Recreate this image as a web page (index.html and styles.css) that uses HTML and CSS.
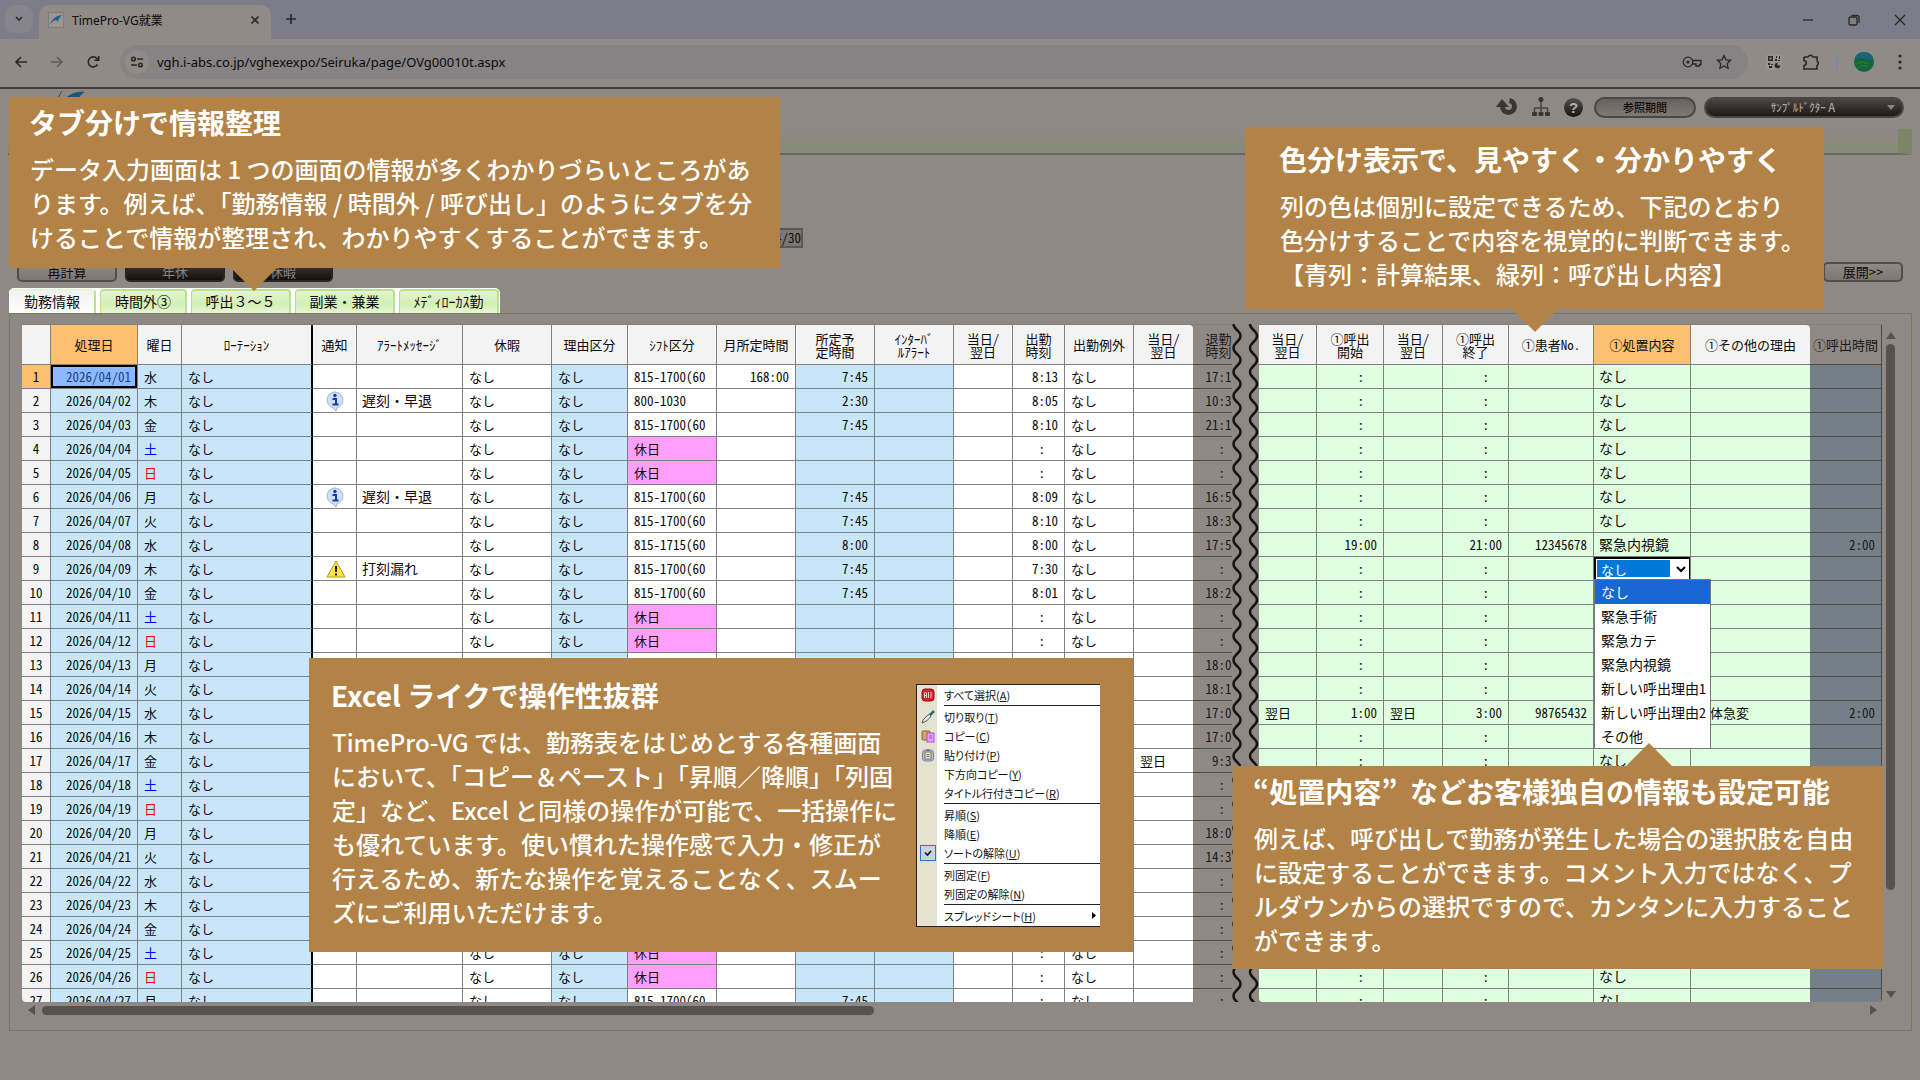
FILE: index.html
```html
<!DOCTYPE html>
<html lang="ja">
<head>
<meta charset="utf-8">
<title>TimePro-VG就業</title>
<link rel="stylesheet" href="styles.css">
</head>
<body>
<div class="window">
  <header class="browser">
    <div class="titlebar">
      <button class="tab-search" aria-label="タブを検索"><svg width="10" height="8" viewBox="0 0 10 8"><path d="M2 2l3 3 3-3" class="ln2"/></svg></button>
      <div class="browser-tab">
        <svg class="favicon" width="16" height="16" viewBox="0 0 16 16"><rect x=".5" y=".5" width="15" height="15" fill="#9a9592" stroke="#827d7a"/><path d="M2 12C5 6 8 4 14 3c-2 2-3 3-4 7-1-3-3-3-8 2z" fill="#1b5f8e"/></svg>
        <span class="tab-title">TimePro-VG就業</span>
        <button class="plain" aria-label="閉じる"><svg width="10" height="10" viewBox="0 0 10 10"><path d="M1.500 1.500l7 7M8.500 1.500l-7 7" class="ln2"/></svg></button>
      </div>
      <button class="plain new-tab" aria-label="新しいタブ"><svg width="12" height="12" viewBox="0 0 12 12"><path d="M6 1v10M1 6h10" class="ln2"/></svg></button>
      <div class="window-controls">
        <button class="plain" aria-label="最小化"><svg width="12" height="12" viewBox="0 0 12 12"><path d="M1 6h10" class="ln"/></svg></button>
        <button class="plain" aria-label="元に戻す"><svg width="12" height="12" viewBox="0 0 12 12"><rect x="1" y="3" width="8" height="8" rx="1.500" class="ln"/><path d="M3.500 1.500H9a2 2 0 0 1 2 2V9" class="ln"/></svg></button>
        <button class="plain" aria-label="ウィンドウを閉じる"><svg width="12" height="12" viewBox="0 0 12 12"><path d="M1 1l10 10M11 1L1 11" class="ln"/></svg></button>
      </div>
    </div>
    <div class="toolbar">
      <button class="plain" aria-label="戻る"><svg width="14" height="14" viewBox="0 0 14 14"><path d="M13 7H2M7 2L2 7l5 5" class="ln2"/></svg></button>
      <button class="plain faded" aria-label="進む"><svg width="14" height="14" viewBox="0 0 14 14"><path d="M1 7h11M7 2l5 5-5 5" class="ln2"/></svg></button>
      <button class="plain" aria-label="再読み込み"><svg width="14" height="14" viewBox="0 0 14 14"><path d="M11.500 9.500A5 5 0 1 1 11 3.500L12.500 5M12.700 1v4.300H8.500" class="ln2"/></svg></button>
      <div class="address">
        <span class="site-info"><svg width="14" height="12" viewBox="0 0 14 12"><circle cx="3.500" cy="3" r="1.800" class="ln2"/><path d="M7 3h6M1 9h6" class="ln2"/><circle cx="10.500" cy="9" r="1.800" class="ln2"/></svg></span>
        <input class="url" aria-label="アドレス" value="vgh.i-abs.co.jp/vghexexpo/Seiruka/page/OVg00010t.aspx">
        <svg width="20" height="12" viewBox="0 0 20 12"><circle cx="6" cy="6" r="4.800" class="ln"/><circle cx="6" cy="6" r="1.600" fill="#2b2725"/><path d="M10.500 4.500H19v4h-1.500V10H14V8h-3.500" class="ln"/></svg>
        <svg width="16" height="16" viewBox="0 0 16 16"><path d="M8 1.500l2 4.300 4.600.5-3.400 3.200.9 4.700L8 11.900l-4.100 2.300.9-4.700L1.400 6.300 6 5.800z" class="ln"/></svg>
      </div>
      <div class="extensions">
        <svg width="16" height="16" viewBox="0 0 16 16"><rect width="16" height="16" rx="2" fill="#999390"/><path d="M2 2h5v5H2zM10 2h1v2h-1zM13 2h1v3h-1zM9 5h2v2H9zM12 6h2v1h-2zM2 9h2v2H2zM5 10h2v1H5zM3 12h3v2H3z" fill="#2b2725"/><path d="M3.500 3.500h2v2h-2z" fill="#999390"/><circle cx="11.500" cy="11.500" r="2.800" fill="#2b2725"/><circle cx="12.800" cy="10" r="1.500" fill="#999390"/></svg>
        <svg width="18" height="18" viewBox="0 0 18 18"><path d="M2 4h4.500M10.500 4H15v4.500M15 12v4H2v-3.500c3-.3 3-4.700 0-5V4M6.500 4a2 1.800 0 0 1 4 0M15 8.500a1.700 1.800 0 0 1 0 3.500" class="ln2"/></svg>
        <span class="divider"></span>
        <svg width="20" height="20" viewBox="0 0 20 20"><circle cx="10" cy="10" r="10" fill="#11663f"/><path d="M.5 7A10 10 0 0 1 19.500 7C14 9 9 4 .5 7z" fill="#17657c"/><path d="M2 13c4-4 8-3 12-1M4 16c3-3 7-3 10-1" fill="none" stroke="#3d7d2a"/></svg>
        <svg class="kebab" width="4" height="16" viewBox="0 0 4 16"><g fill="#2b2725"><circle cx="2" cy="2" r="1.600"/><circle cx="2" cy="8" r="1.600"/><circle cx="2" cy="14" r="1.600"/></g></svg>
      </div>
    </div>
  </header>

  <main class="app">
    <div class="app-head">
      <div class="brand">
        <svg width="32" height="24" viewBox="0 0 32 24"><path d="M2 10L8 0M6 20C8 8 16 1 30 1c-6 4-8 9-9 18-3-8-8-7-15 1z" fill="#1b5579" stroke="#1b5579"/></svg>
        <span>TimePro-<b>VG</b></span>
      </div>
      <div class="app-actions">
        <svg width="22" height="22" viewBox="0 0 22 22"><path d="M6.500 10a6 6 0 1 0 7-5.500" fill="none" stroke="#3a3634" stroke-width="5"/><path d="M0 11L6 3l7 8z" fill="#3a3634"/></svg>
        <svg width="18" height="20" viewBox="0 0 18 20"><path d="M9 3v14M2.500 17v-6h13v6" fill="none" stroke="#4a4644" stroke-width="1.500"/><g fill="#3a3634"><circle cx="9" cy="2.500" r="2.500"/><rect y="15" width="5" height="4" rx="1"/><rect x="6.500" y="15" width="5" height="4" rx="1"/><rect x="13" y="15" width="5" height="4" rx="1"/></g></svg>
        <button class="help" aria-label="ヘルプ">?</button>
        <button class="pill">参照期間</button>
        <button class="pill pill-dark"><span>ｻﾝﾌﾟﾙﾄﾞｸﾀｰ A</span><svg width="8" height="5" viewBox="0 0 8 5"><path d="M0 0h8L4 5z" fill="#8a8582"/></svg></button>
      </div>
    </div>
    <div class="menu-band"></div>
    <div class="conditions">
      <span class="period">2026/04/01～2026/04/30</span>
    </div>
    <div class="commands">
      <button class="cmd">再計算</button>
      <button class="cmd cmd-dark">年休</button>
      <button class="cmd cmd-dark">休暇</button>
      <button class="cmd expand">展開&gt;&gt;</button>
    </div>
    <nav class="tabs">
      <button class="tab active">勤務情報</button>
      <button class="tab">時間外③</button>
      <button class="tab wide">呼出３～５</button>
      <button class="tab wide">副業・兼業</button>
      <button class="tab wide">ﾒﾃﾞｨﾛｰｶｽ勤</button>
    </nav>
    <section class="panel">
      <div class="sheet">
        <div class="pane pane-left">
          <table class="grid" id="left-grid">
            <colgroup><col class="w29"><col class="w87"><col class="w44"><col class="w131"><col class="w44"><col class="w106"><col class="w89"><col class="w76"><col class="w89"><col class="w79"><col class="w79"><col class="w79"><col class="w59"><col class="w52"><col class="w69"><col class="w59"><col class="w52"></colgroup>
            <thead><tr><th></th><th class="picked">処理日</th><th>曜日</th><th class="frozen">ﾛｰﾃｰｼｮﾝ</th><th>通知</th><th>ｱﾗｰﾄﾒｯｾｰｼﾞ</th><th>休暇</th><th>理由区分</th><th>ｼﾌﾄ区分</th><th>月所定時間</th><th>所定予<br>定時間</th><th>ｲﾝﾀｰﾊﾞ<br>ﾙｱﾗｰﾄ</th><th>当日/<br>翌日</th><th>出勤<br>時刻</th><th>出勤例外</th><th class="edge">当日/<br>翌日</th><th class="dim">退勤<br>時刻</th></tr></thead>
            <tbody></tbody>
          </table>
        </div>
        <svg class="tear" aria-hidden="true">
          <defs><pattern id="wave" width="27" height="24" patternUnits="userSpaceOnUse"><path d="M8.500 -12C8.500 -6 1.500 -6 1.500 0S8.500 6 8.500 12S1.500 18 1.500 24S8.500 30 8.500 36M25 -12C25 -6 18 -6 18 0S25 6 25 12S18 18 18 24S25 30 25 36" fill="none" stroke="#1c1210" stroke-width="2.500"/></pattern></defs>
          <rect width="100%" height="100%" fill="url(#wave)"/>
        </svg>
        <div class="pane pane-right">
          <table class="grid" id="right-grid">
            <colgroup><col class="w58"><col class="w67"><col class="w59"><col class="w66"><col class="w85"><col class="w97"><col><col class="w72"></colgroup>
            <thead><tr><th>当日/<br>翌日</th><th>①呼出<br>開始</th><th>当日/<br>翌日</th><th>①呼出<br>終了</th><th>①患者No.</th><th class="picked">①処置内容</th><th class="edge">①その他の理由</th><th class="dim">①呼出時間</th></tr></thead>
            <tbody></tbody>
          </table>
        </div>
        <div class="vscroll"><i class="up"></i><i class="vthumb"></i><i class="down"></i></div>
      </div>
      <div class="hscroll"><i class="prev"></i><i class="hthumb"></i><i class="next"></i></div>
    </section>
  </main>

  <aside class="callout c-tabs">
    <h2>タブ分けで情報整理</h2>
    <p>データ入力画面は 1 つの画面の情報が多くわかりづらいところがあ<br>ります。例えば、「勤務情報 / 時間外 / 呼び出し」のようにタブを分<br>けることで情報が整理され、わかりやすくすることができます。</p>
  </aside>
  <aside class="callout c-colors">
    <h2>色分け表示で、見やすく・分かりやすく</h2>
    <p>列の色は個別に設定できるため、下記のとおり<br>色分けすることで内容を視覚的に判断できます。<br>【青列：計算結果、緑列：呼び出し内容】</p>
  </aside>
  <aside class="callout c-excel">
    <div class="callout-text">
      <h2>Excel ライクで操作性抜群</h2>
      <p>TimePro-VG では、勤務表をはじめとする各種画面<br>において、「コピー＆ペースト」「昇順／降順」「列固<br>定」など、Excel と同様の操作が可能で、一括操作に<br>も優れています。使い慣れた操作感で入力・修正が<br>行えるため、新たな操作を覚えることなく、スムー<br>ズにご利用いただけます。</p>
    </div>
    <ul class="context-menu">
      <li><svg width="14" height="14" viewBox="0 0 14 14"><rect x="1" y="1" width="12" height="12" rx="3" fill="#d8202c" stroke="#8c1018"/><path d="M3.500 10V5l1-1 1 1v5M3.500 7.500h2M7.500 4v6M10 4v6" fill="none" stroke="#ffc9c9"/></svg><span>すべて選択(<u>A</u>)</span></li>
      <li class="sep"></li>
      <li><svg width="14" height="14" viewBox="0 0 14 14"><path d="M1 13C2 9 5 6 9 4l1 2C8 9 5 12 1 13z" fill="#dfe5e8" stroke="#555"/><path d="M9 5l4-4" stroke="#26716f" stroke-width="2.500"/></svg><span>切り取り(<u>T</u>)</span></li>
      <li><svg width="14" height="14" viewBox="0 0 14 14"><rect x="1" y="2" width="8" height="9" rx="1" fill="#d6a662" stroke="#8d6425"/><rect x="6" y="4" width="7" height="9" fill="#e3a0ff" stroke="#a050e0"/><path d="M8 7h3M8 9h3" stroke="#a050e0"/></svg><span>コピー(<u>C</u>)</span></li>
      <li><svg width="14" height="14" viewBox="0 0 14 14"><rect x="1.500" y="2" width="11" height="11" rx="3" fill="#b8b8dc" stroke="#7d7da6"/><rect x="4" y="4" width="6" height="7" fill="#eeeed8" stroke="#77775f"/><path d="M5.500 6.500h3M5.500 8.500h3M5 2h4" stroke="#66664f"/></svg><span>貼り付け(<u>P</u>)</span></li>
      <li><i></i><span>下方向コピー(<u>Y</u>)</span></li>
      <li><i></i><span>タイトル行付きコピー(<u>R</u>)</span></li>
      <li class="sep"></li>
      <li><i></i><span>昇順(<u>S</u>)</span></li>
      <li><i></i><span>降順(<u>E</u>)</span></li>
      <li><svg class="checked" width="16" height="16" viewBox="0 0 16 16"><rect x=".5" y=".5" width="15" height="15" fill="#c9d2e0" stroke="#2f6fd8"/><path d="M5 7.500l2.500 2.500L11 6" fill="none" stroke="#111" stroke-width="1.600"/></svg><span>ソートの解除(<u>U</u>)</span></li>
      <li class="sep"></li>
      <li><i></i><span>列固定(<u>F</u>)</span></li>
      <li><i></i><span>列固定の解除(<u>N</u>)</span></li>
      <li class="sep"></li>
      <li><i></i><span>スプレッドシート(<u>H</u>)</span><svg class="more" width="4" height="7" viewBox="0 0 4 7"><path d="M0 0l4 3.500L0 7z"/></svg></li>
    </ul>
  </aside>
  <aside class="callout c-custom">
    <h2>“処置内容”&nbsp;&nbsp;などお客様独自の情報も設定可能</h2>
    <p>例えば、呼び出しで勤務が発生した場合の選択肢を自由<br>に設定することができます。コメント入力ではなく、プ<br>ルダウンからの選択ですので、カンタンに入力すること<br>ができます。</p>
  </aside>
</div>
<script src="app.js"></script>
</body>
</html>
```

FILE: styles.css
```css
* { box-sizing: border-box; }

body {
  margin: 0;
  background: #8f8985;
  color: #0c0a09;
  font-family: "Noto Sans CJK JP", sans-serif;
  font-size: 13px;
}

button, input, select { font: inherit; color: inherit; }
button { padding: 0; border: 0; background: none; }
svg { display: block; flex: none; }

.ln, .ln2 { fill: none; stroke: #2b2725; stroke-width: 1.3; }
.ln2 { stroke-width: 1.6; }

.window { position: relative; min-height: 100vh; overflow: hidden; }

/* browser frame */
.titlebar {
  display: flex;
  align-items: center;
  height: 39px;
  padding: 5px 14px 0 5px;
  background: #7c7d89;
}
.tab-search {
  display: grid;
  place-items: center;
  width: 28px;
  height: 28px;
  margin: 0 6px 6px 0;
  border-radius: 10px;
  background: #86858d;
}
.browser-tab {
  display: flex;
  align-items: center;
  gap: 8px;
  width: 232px;
  height: 34px;
  padding: 0 11px 4px 9px;
  border-radius: 10px 10px 0 0;
  background: #918b87;
}
.tab-title { flex: 1; font: 12px "Noto Sans", "Noto Sans CJK JP", sans-serif; }
.plain { display: grid; place-items: center; }
.new-tab { margin: 0 0 6px 14px; }
.window-controls { display: flex; gap: 34px; margin: 0 0 4px auto; }

.toolbar {
  display: flex;
  align-items: center;
  height: 48px;
  padding: 0 18px 2px 14px;
  gap: 22px;
  background: #918b87;
}
.faded { opacity: .45; }
.address {
  display: flex;
  align-items: center;
  gap: 14px;
  flex: 1;
  height: 34px;
  margin-left: -2px;
  padding: 0 16px 0 5px;
  border-radius: 17px;
  background: #868385;
}
.site-info {
  display: grid;
  place-items: center;
  width: 24px;
  height: 24px;
  margin-right: -6px;
  border-radius: 12px;
  background: #918b87;
}
.url {
  flex: 1;
  min-width: 0;
  padding: 0;
  border: 0;
  background: none;
  font: 13px "Noto Sans", sans-serif;
}
.extensions { display: flex; align-items: center; gap: 20px; margin-left: -4px; }
.divider { width: 2px; height: 16px; background: #7f88a0; margin: 0 -4px; }
.kebab { margin-left: 4px; }

/* application header */
.app { border-top: 2px solid #403c3a; }
.app-head { display: flex; justify-content: space-between; height: 40px; padding: 0 16px 0 54px; }
.brand { display: flex; gap: 6px; padding-top: 2px; font: bold 26px/36px "Liberation Sans", sans-serif; color: #403c3a; }
.brand b { color: #1b5579; }
.app-actions { display: flex; align-items: center; gap: 14px; padding-bottom: 4px; }
.help {
  width: 19px;
  height: 19px;
  border-radius: 10px;
  background: linear-gradient(#56514e, #161311);
  color: #b5b0ad;
  font: bold 15px/19px "Liberation Sans", sans-serif;
}
.pill {
  width: 102px;
  height: 21px;
  margin-left: -3px;
  border: 2px solid #4b4745;
  border-radius: 11px;
  background: linear-gradient(#67625f, #7f7976);
  font-size: 11px;
  font-weight: 500;
  line-height: 17px;
}
.pill-dark {
  display: flex;
  align-items: center;
  justify-content: center;
  gap: 52px;
  width: 200px;
  margin-left: -6px;
  padding-left: 58px;
  border-color: #4a4543;
  background: linear-gradient(#4b4643, #1d1917);
  color: #a8a29f;
}
.menu-band {
  height: 26px;
  margin: 0 8px;
  border-bottom: 2px solid #6b6764;
  border-right: 14px solid #7c8667;
  background: linear-gradient(#8f8985, #858b74);
}
.conditions {
  display: flex;
  align-items: flex-end;
  height: 96px;
  margin: 0 8px;
  padding: 0 0 3px 620px;
}
.period {
  width: 175px;
  height: 20px;
  border: 2px solid #5b5754;
  background: #7c7774;
  text-align: right;
  line-height: 16px;
  font-feature-settings: "hwid";
}
.commands { display: flex; gap: 8px; padding: 11px 17px 6px; }
.cmd {
  width: 100px;
  height: 20px;
  border: 2px solid #524e4b;
  border-radius: 5px;
  background: linear-gradient(#8f8985, #7d7774);
  font-size: 13px;
  line-height: 16px;
}
.cmd-dark { border-color: #2a2624; background: linear-gradient(#3f3a37, #120f0d); color: #8b8582; }
.expand { width: 80px; margin-left: auto; }

/* sheet tabs */
.tabs {
  display: flex;
  gap: 4px;
  width: max-content;
  margin-left: 9px;
  padding: 1px 1px 0 0;
  border-radius: 5px 5px 0 0;
  background: #fff;
}
.tab {
  width: 87px;
  height: 24px;
  padding-bottom: 2px;
  border: solid #b9e28c;
  border-width: 2px 2px 0 1px;
  border-radius: 4px 4px 0 0;
  background: linear-gradient(#e2f5cf, #d3efb4 60%, #e6f7d6);
  font-size: 14px;
  line-height: 20px;
}
.tab.wide { width: 100px; }
.tab.active { background: linear-gradient(#f1f1f1, #fff); border-color: #e8f5dc #b9e28c #fff #fff; }

.panel {
  margin: 0 8px 49px 9px;
  padding: 10px 12px 12px 12px;
  border: 1px solid #747c58;
}
.sheet { display: flex; height: calc(100vh - 402px); }
.pane { overflow: hidden; border-top: 1px solid #808080; border-radius: 0 0 4px 4px; }
.pane-left { flex: 0 0 1210px; }
.pane-right { flex: 1; min-width: 0; }
.tear { width: 27px; height: 100%; }

.grid {
  width: 100%;
  table-layout: fixed;
  border-collapse: separate;
  border-spacing: 0;
  font-size: 13px;
  line-height: 15px;
  font-feature-settings: "hwid";
  white-space: nowrap;
}
#left-grid { width: 1223px; }
.w29 { width: 29px; } .w44 { width: 44px; } .w52 { width: 52px; } .w58 { width: 58px; }
.w59 { width: 59px; } .w66 { width: 66px; } .w67 { width: 67px; } .w69 { width: 69px; }
.w72 { width: 72px; } .w76 { width: 76px; } .w79 { width: 79px; } .w85 { width: 85px; }
.w87 { width: 87px; } .w89 { width: 89px; } .w97 { width: 97px; } .w106 { width: 106px; }
.w131 { width: 131px; }

.grid th, .grid td {
  padding: 0;
  border: solid #808080;
  border-width: 0 1px 1px 0;
}
.grid th { height: 40px; background: #f3f3f3; font-weight: 400; text-align: center; line-height: 13px; }
.grid td { height: 24px; padding: 0 6px; overflow: hidden; background: #fff; }
.grid .frozen { border-right: 2px solid #000; }
.grid th.edge { border-radius: 0 4px 0 0; }
.grid td.num { padding: 0; background: #f3f3f3; text-align: center; }
.grid th.picked, .grid td.picked { background: #ffc070; }
.grid td.blue { background: #c8e6fa; }
.grid td.green { background: #e0ffe0; }
.grid td.pink { background: #ffa0ff; }
.grid td.note { padding: 0 5px; font-size: 14px; }
.grid td.right { text-align: right; }
.grid td.blank { padding-right: 19px; text-align: right; }
.grid td.sat { color: #0000ff; }
.grid td.sun { color: #ff0000; }
.grid td.current { background: #8cb8ff; color: #1f3f7a; box-shadow: inset 0 0 0 2px #000; }
.grid th.dim, .grid td.dim { border-color: #4c4846; background: #8f8985; color: #1c1917; }
.grid td.dim-blue { border-color: #4c4846; background: #757f88; color: #1c1917; }
.grid .edge { border-right: 0; }
.grid td.icon { padding: 0 0 0 13px; }
.grid td.editing { position: relative; overflow: visible; padding: 0; background: #fff; }

.combo {
  display: block;
  width: 100%;
  height: 23px;
  padding: 0 0 0 5px;
  border: solid #000;
  border-width: 2px 1px 1px 2px;
  border-radius: 0;
  appearance: none;
  color: #fff;
  background: linear-gradient(#0078d7, #0078d7) 1px 1px / calc(100% - 20px) 17px no-repeat #fff;
}
.combo-arrow { position: absolute; right: 4px; top: 9px; }
.options {
  position: absolute;
  z-index: 2;
  top: 22px;
  left: 0;
  width: 117px;
  margin: 0;
  padding: 0;
  border: 1px solid #777;
  list-style: none;
  background: #fff;
  font-size: 14px;
}
.options li { height: 24px; padding-left: 6px; line-height: 24px; }
.options .chosen { background: #1a66d4; color: #fff; }

.vscroll { display: flex; flex-direction: column; align-items: center; width: 17px; padding: 8px 0 4px; }
.vscroll i, .hscroll i { flex: none; }
.vthumb { width: 9px; height: 82%; margin: 5px 0 auto; border-radius: 5px; background: #58524f; }
.hscroll { display: flex; align-items: center; height: 16px; padding: 0 22px 0 6px; }
.hthumb { width: 45%; height: 9px; margin: 0 auto 0 7px; border-radius: 5px; background: #58524f; }
.up, .down { border: solid transparent; border-width: 0 5px 7px; border-bottom-color: #58524f; }
.down { border-width: 7px 5px 0; border-top-color: #58524f; }
.prev, .next { border: solid transparent; border-width: 5px 7px 5px 0; border-right-color: #58524f; }
.next { border-width: 5px 0 5px 7px; border-left-color: #58524f; }

/* explanatory callouts */
.callout {
  position: absolute;
  z-index: 5;
  background: #b28246;
  color: #fff;
}
.callout h2 { margin: 0 0 12px; font-size: 28px; line-height: 36px; font-weight: 700; white-space: nowrap; }
.callout p { margin: 0; padding-left: 1px; font-size: 24px; line-height: 34px; font-weight: 500; white-space: nowrap; }
.callout::after {
  content: "";
  position: absolute;
  border: solid transparent;
  border-width: 23px 23px 0;
  border-top-color: #b28246;
}
.c-tabs { top: 97px; left: 9px; width: 771px; padding: 7px 20px 14px; }
.c-tabs::after { top: 100%; left: 222px; }
.c-colors { top: 127px; right: 96px; width: 579px; padding: 14px 34px 18px; }
.c-colors::after { top: 100%; left: 267px; }
.c-excel { display: flex; justify-content: space-between; top: 658px; left: 309px; width: 824px; padding: 19px 33px 23px 22px; }
.c-excel::after { display: none; }
.c-custom { top: 766px; right: 37px; width: 650px; padding: 7px 20px 12px; }
.c-custom::after { bottom: 100%; left: 393px; border-width: 0 23px 23px; border-bottom-color: #b28246; }

.context-menu {
  width: 184px;
  height: 243px;
  margin: 7px 0 0;
  padding: 0;
  border: solid #222;
  border-width: 1px 0 1px 1px;
  list-style: none;
  background: linear-gradient(90deg, #e6e2d2 20px, #fff 20px);
  color: #111;
  font-size: 11px;
  line-height: 18px;
  font-feature-settings: "palt";
}
.context-menu li { display: flex; align-items: center; gap: 9px; height: 19px; padding-left: 4px; }
.context-menu li i { width: 14px; }
.context-menu .checked { margin: 0 -1px; }
.context-menu .sep { height: 1px; margin: 1px 0 1px 27px; background: #222; }
.context-menu .more { margin: 0 4px 0 auto; }
```

FILE: app.js
```js
const days = ['水', '木', '金', '土', '日', '月', '火'];
const info = '<svg width="18" height="20" viewBox="0 0 18 20"><path d="M9 1a8 8 0 0 1 2 15.700L10 20l-3-3.300A8 8 0 0 1 9 1z" fill="#cfe0f4" stroke="#9db4d0"/><circle cx="9" cy="4.500" r="1.700" fill="#123fa8"/><path d="M6.500 8H10v5.500M6.500 13.500h6" fill="none" stroke="#123fa8" stroke-width="2"/></svg>';
const warn = '<svg width="20" height="18" viewBox="0 0 20 18"><path d="M10 1l9 16H1z" fill="#ffe24a" stroke="#b89a10" stroke-linejoin="round"/><path d="M10 6v6M10 13.500v2" stroke="#111" stroke-width="2"/></svg>';

const shifts = { 2: '800-1030', 8: '815-1715(60' };
const planned = { 2: '2:30', 8: '8:00' };
const arrivals = { 1: '8:13', 2: '8:05', 3: '8:10', 6: '8:09', 7: '8:10', 8: '8:00', 9: '7:30', 10: '8:01' };
const leavings = { 1: '17:15', 2: '10:37', 3: '21:18', 6: '16:54', 7: '18:37', 8: '17:54', 10: '18:21', 13: '18:00', 14: '18:15', 15: '17:02', 16: '17:02', 17: ' 9:32', 20: '18:00', 21: '14:32' };
const notices = { 2: [info, '遅刻・早退'], 6: [info, '遅刻・早退'], 9: [warn, '打刻漏れ'] };
const calls = {
  8: ['', '19:00', '', '21:00', '12345678', '緊急内視鏡', '', '2:00'],
  15: ['翌日', '1:00', '翌日', '3:00', '98765432', '新しい呼出理由2', '容体急変', '2:00']
};
const reasons = ['なし', '緊急手術', '緊急カテ', '緊急内視鏡', '新しい呼出理由1', '新しい呼出理由2', 'その他'];

const cell = (text, cls = '') => `<td class="${cls}">${text}</td>`;
const time = (text, cls = '') => cell(text || ':', `${cls} ${text ? 'right' : 'blank'}`);

let left = '';
let right = '';
for (let d = 1; d <= 27; d++) {
  const weekday = (d - 1) % 7;
  const off = weekday === 3 || weekday === 4;
  const [icon, alert] = notices[d] || ['', ''];
  left += '<tr>' +
    cell(d, d === 1 ? 'num picked' : 'num') +
    cell('2026/04/' + String(d).padStart(2, '0'), d === 1 ? 'right current' : 'right blue') +
    cell(days[weekday], 'blue' + (weekday === 3 ? ' sat' : weekday === 4 ? ' sun' : '')) +
    cell('なし', 'blue frozen') +
    cell(icon, 'icon') + cell(alert, 'note') + cell('なし') + cell('なし', 'blue') +
    cell(off ? '休日' : shifts[d] || '815-1700(60', off ? 'pink' : '') +
    cell(d === 1 ? '168:00' : '', 'right') +
    cell(off ? '' : planned[d] || '7:45', 'blue right') + cell('', 'blue') + cell('') +
    time(arrivals[d]) + cell('なし') + cell(d === 17 ? '翌日' : '', 'edge') +
    time(leavings[d], 'dim') + '</tr>';

  const c = calls[d] || ['', '', '', '', '', 'なし', '', ''];
  const editor = '<td class="green editing"><select class="combo" aria-label="処置内容"><option>なし</option></select>' +
    '<svg class="combo-arrow" width="10" height="7" viewBox="0 0 10 7"><path d="M1 1l4 4 4-4" fill="none" stroke="#000" stroke-width="2"/></svg>' +
    '<ul class="options">' + reasons.map((r, i) => `<li${i ? '' : ' class="chosen"'}>${r}</li>`).join('') + '</ul></td>';
  right += '<tr>' + cell(c[0], 'green') + time(c[1], 'green') + cell(c[2], 'green') + time(c[3], 'green') +
    cell(c[4], 'green right') + (d === 9 ? editor : cell(c[5], 'green note')) +
    cell(c[6], 'green edge') + cell(c[7], 'dim-blue right') + '</tr>';
}
document.querySelector('#left-grid tbody').innerHTML = left;
document.querySelector('#right-grid tbody').innerHTML = right;
```
